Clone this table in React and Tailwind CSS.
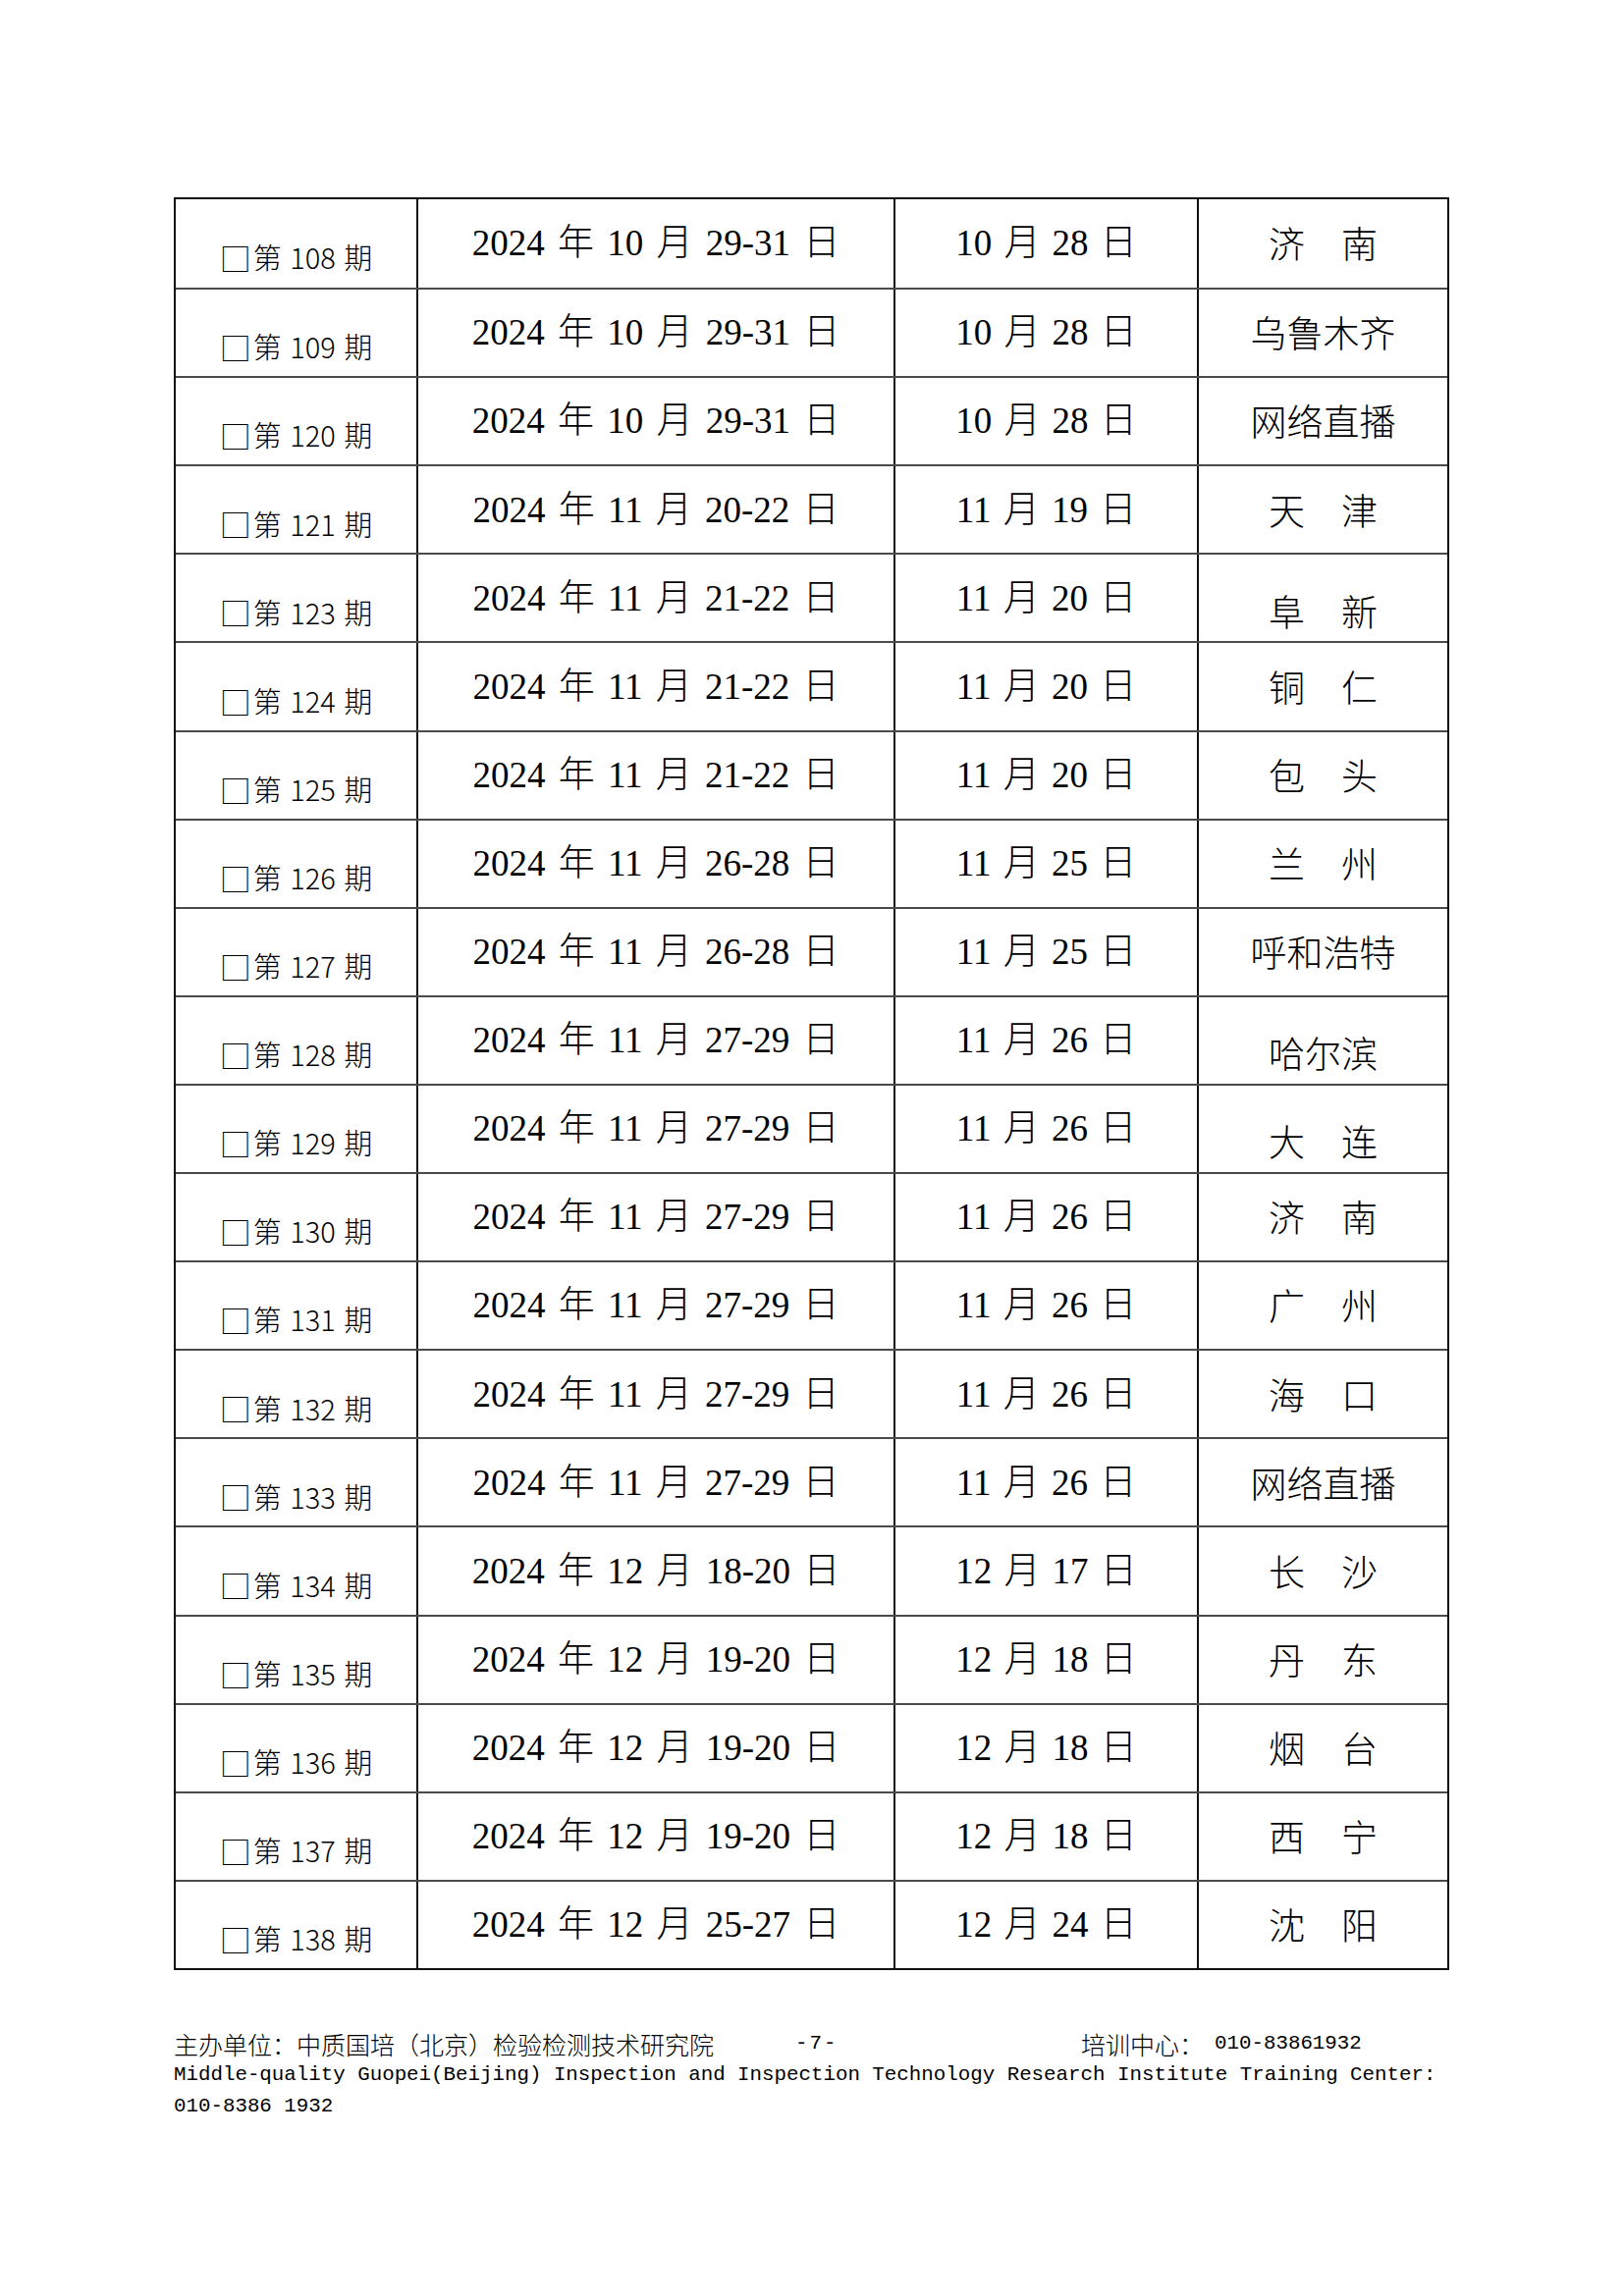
const rows = [
  ["108", "2024 年 10 月 29-31 日", "10 月 28 日", "济南"],
  ["109", "2024 年 10 月 29-31 日", "10 月 28 日", "乌鲁木齐"],
  ["120", "2024 年 10 月 29-31 日", "10 月 28 日", "网络直播"],
  ["121", "2024 年 11 月 20-22 日", "11 月 19 日", "天津"],
  ["123", "2024 年 11 月 21-22 日", "11 月 20 日", "阜新", true],
  ["124", "2024 年 11 月 21-22 日", "11 月 20 日", "铜仁"],
  ["125", "2024 年 11 月 21-22 日", "11 月 20 日", "包头"],
  ["126", "2024 年 11 月 26-28 日", "11 月 25 日", "兰州"],
  ["127", "2024 年 11 月 26-28 日", "11 月 25 日", "呼和浩特"],
  ["128", "2024 年 11 月 27-29 日", "11 月 26 日", "哈尔滨", true],
  ["129", "2024 年 11 月 27-29 日", "11 月 26 日", "大连", true],
  ["130", "2024 年 11 月 27-29 日", "11 月 26 日", "济南"],
  ["131", "2024 年 11 月 27-29 日", "11 月 26 日", "广州"],
  ["132", "2024 年 11 月 27-29 日", "11 月 26 日", "海口"],
  ["133", "2024 年 11 月 27-29 日", "11 月 26 日", "网络直播"],
  ["134", "2024 年 12 月 18-20 日", "12 月 17 日", "长沙"],
  ["135", "2024 年 12 月 19-20 日", "12 月 18 日", "丹东"],
  ["136", "2024 年 12 月 19-20 日", "12 月 18 日", "烟台"],
  ["137", "2024 年 12 月 19-20 日", "12 月 18 日", "西宁"],
  ["138", "2024 年 12 月 25-27 日", "12 月 24 日", "沈阳"],
];

function Place({ name, low }) {
  const pad = low ? "pt-[26px]" : "";
  if (name.length === 2) {
    return (
      <div className={`flex items-center justify-center h-full ${pad}`}>
        <div className="flex justify-between w-[111px]">
          <span>{name[0]}</span>
          <span>{name[1]}</span>
        </div>
      </div>
    );
  }
  return (
    <div className={`flex items-center justify-center h-full ${pad}`}>
      <span>{name}</span>
    </div>
  );
}

export default function App() {
  return (
    <div className="bg-white w-[1654px] h-[2339px] text-black pt-[201px] pl-[177px]">
      <div className="w-[1299px] border-2 border-[#111]">
        {rows.map((r, i) => (
          <div
            key={r[0]}
            className={`grid grid-cols-[247px_486px_309px_1fr] h-[90.1px] ${
              i > 0 ? "border-t-2 border-[#4a4a4a]" : ""
            }`}
          >
            <div className="border-r-2 border-[#111] flex items-center justify-center pt-[28px] font-['Noto_Sans_CJK_SC',sans-serif] font-light text-[29px] [word-spacing:2px]">
              <span className="text-[32px] leading-none mr-[2px]">□</span>
              <span>第 {r[0]} 期</span>
            </div>
            <div className="border-r-2 border-[#111] flex items-center justify-center font-['Liberation_Serif','Noto_Sans_CJK_SC',serif] text-[37px] font-light [word-spacing:4px]">
              {r[1]}
            </div>
            <div className="border-r-2 border-[#111] flex items-center justify-center font-['Liberation_Serif','Noto_Sans_CJK_SC',serif] text-[37px] font-light [word-spacing:3px]">
              {r[2]}
            </div>
            <div className="font-['Noto_Sans_CJK_SC',sans-serif] text-[37px] font-light">
              <Place name={r[3]} low={r[4]} />
            </div>
          </div>
        ))}
      </div>

      <div className="mt-[59px] leading-[32px] font-['Liberation_Mono','Noto_Sans_CJK_SC',monospace] text-[20.8px]">
        <div className="flex items-center h-[32px]">
          <span className="w-[633px] font-['Noto_Sans_CJK_SC',sans-serif] font-light text-[25px]">
            主办单位：中质国培（北京）检验检测技术研究院
          </span>
          <span className="w-[291px] tracking-[2px]">-7-</span>
          <span className="font-['Noto_Sans_CJK_SC',sans-serif] font-light text-[25px] mr-[11px]">
            培训中心：
          </span>
          <span>010-83861932</span>
        </div>
        <div>
          Middle-quality Guopei(Beijing) Inspection and Inspection Technology Research Institute Training Center:
        </div>
        <div>010-8386 1932</div>
      </div>
    </div>
  );
}
